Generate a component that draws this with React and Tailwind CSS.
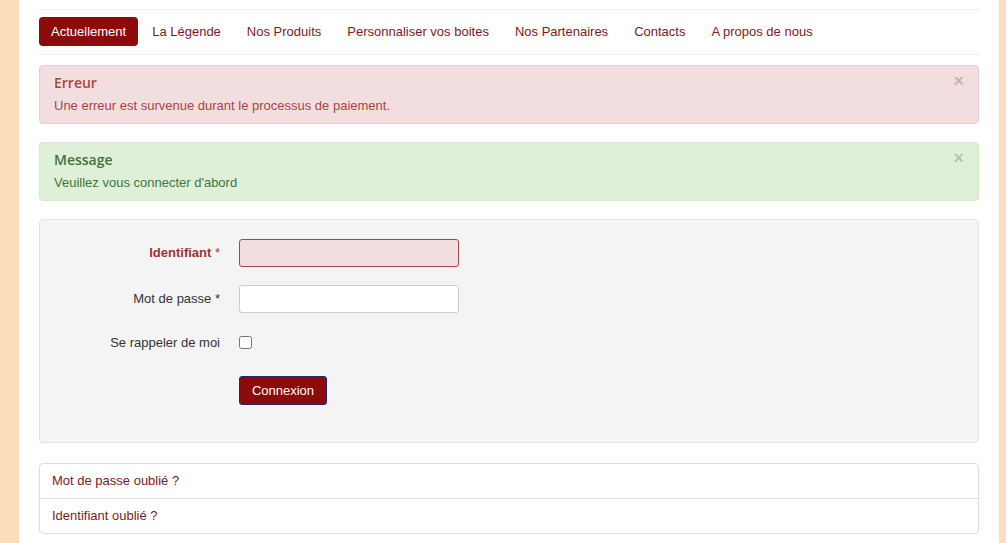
import React from 'react';

const navItems = ['Actuellement', 'La Légende', 'Nos Produits', 'Personnaliser vos boites', 'Nos Partenaires', 'Contacts', 'A propos de nous'];

// ─── Alerte fermable ──────────────────────────────────────────────────────────
const Alert = ({ title, text, tone }) => {
    const styles = tone === 'error'
        ? 'bg-[#f2dede] border-[#ebccd1] text-[#a94442]'
        : 'bg-[#dff0d8] border-[#d6e9c6] text-[#3c763d]';
    return (
        <div className={`relative border rounded-[4px] px-[14px] pt-[7px] pb-[7px] ${styles}`}>
            <div className="text-[14px] leading-[20px] font-semibold" style={{ fontFamily: '"Open Sans", sans-serif' }}>{title}</div>
            <div className="text-[13px] leading-[20px] mt-[3px]">{text}</div>
            <span className="absolute right-[14px] top-[5px] text-[18px] font-bold leading-[20px] text-black/20">×</span>
        </div>
    );
};

const App = () => {
    return (
        <div className="min-h-screen bg-[#fddcbb] flex" style={{ fontFamily: '"Liberation Sans", Arial, sans-serif' }}>
            <div className="ml-[19px] w-[980px] h-[543px] bg-white px-[20px] pt-[9px]">

                {/* Menu principal */}
                <nav className="border-t border-b border-[#eeeeee] flex items-center pt-[7px] pb-[8px]">
                    {navItems.map((item, i) => (
                        <a key={item}
                            className={i === 0
                                ? 'px-[12px] h-[29px] flex items-center rounded-[4px] bg-[#8c0a0a] text-white text-[13px] mr-[1px]'
                                : 'px-[13px] h-[29px] flex items-center text-[#7d1a1a] text-[13px]'}>
                            {item}
                        </a>
                    ))}
                </nav>

                <div className="mt-[10px] flex flex-col gap-[18px]">
                    <Alert tone="error" title="Erreur" text="Une erreur est survenue durant le processus de paiement." />
                    <Alert tone="success" title="Message" text="Veuillez vous connecter d'abord" />
                </div>

                {/* Formulaire de connexion */}
                <form className="mt-[18px] h-[224px] bg-[#f4f4f4] border border-[#e3e3e3] rounded-[4px] pt-[19px]">
                    <div className="flex items-center gap-[19px] h-[28px]">
                        <label className="w-[180px] text-right text-[13px] text-[#a13333]"><span className="font-bold">Identifiant</span> *</label>
                        <input className="w-[220px] h-[28px] rounded-[3px] border border-[#a94442] bg-[#f2dede]" />
                    </div>
                    <div className="flex items-center gap-[19px] h-[28px] mt-[18px]">
                        <label className="w-[180px] text-right text-[13px] text-[#333333]">Mot de passe *</label>
                        <input type="password" className="w-[220px] h-[28px] rounded-[3px] border border-[#cccccc] bg-white" />
                    </div>
                    <div className="flex items-center gap-[19px] h-[20px] mt-[20px]">
                        <label className="w-[180px] text-right text-[13px] text-[#333333]">Se rappeler de moi</label>
                        <input type="checkbox" className="w-[13px] h-[13px] -mt-[2px]" />
                    </div>
                    <div className="pl-[199px] mt-[23px]">
                        <button type="button" className="w-[88px] h-[29px] rounded-[3px] bg-[#8c0a0a] border border-[#1e2a6b] text-white text-[13px]">
                            Connexion
                        </button>
                    </div>
                </form>

                {/* Liens oubliés */}
                <div className="mt-[20px] border border-[#dddddd] rounded-[4px] bg-white">
                    <a className="block h-[35px] leading-[34px] px-[12px] text-[13px] text-[#7d1a1a] border-b border-[#dddddd]">Mot de passe oublié ?</a>
                    <a className="block h-[34px] leading-[34px] px-[12px] text-[13px] text-[#7d1a1a]">Identifiant oublié ?</a>
                </div>
            </div>
        </div>
    );
};

export default App;
